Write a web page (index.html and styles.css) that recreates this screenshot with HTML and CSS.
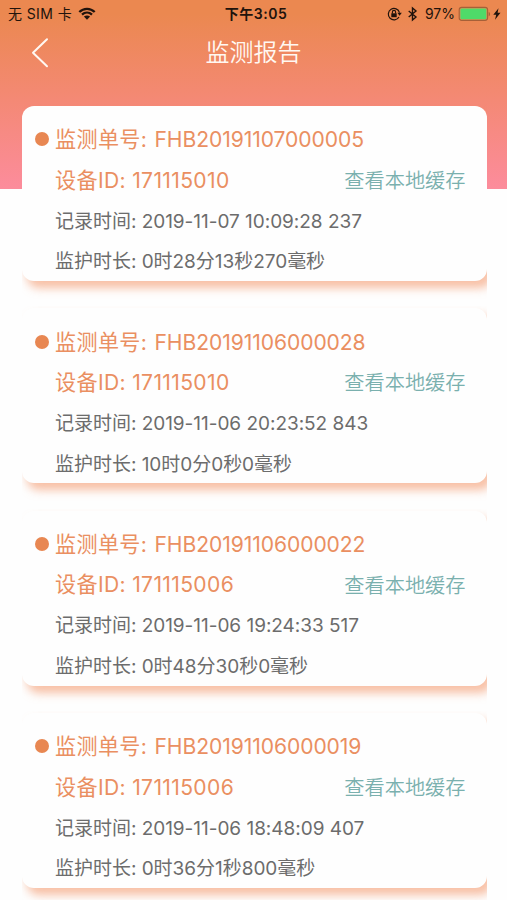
FILE: index.html
```html
<!DOCTYPE html>
<html lang="zh-CN">
<head>
<meta charset="utf-8">
<title>监测报告</title>
<link rel="stylesheet" href="styles.css">
</head>
<body>
<div class="screen">
  <header class="status">
    <div class="carrier"><span>无 SIM 卡</span>
      <svg class="wifi" viewBox="0 0 18 13"><path d="M1.3 5C5.7.7 12.3.7 16.7 5M4 7.7c2.9-2.7 7.1-2.7 10 0" fill="none" stroke="currentColor" stroke-width="2.3"/><path d="M5.9 9.6c1.8-1.6 4.4-1.6 6.2 0L9 12.7z" fill="currentColor"/></svg>
    </div>
    <div class="clock">下午3:05</div>
    <div class="indicators">
      <svg class="lock" viewBox="0 0 15 14"><path d="M12 10A5.7 5.7 0 1 1 12.5 5.6" fill="none" stroke="currentColor" stroke-width="1.2"/><path d="M10.4 5.7h4.4L12.6 8.8z" fill="currentColor"/><path d="M4.3 6.3h5.4v3.9H4.3z" fill="currentColor"/><path d="M5.4 6.6V5a1.6 1.6 0 0 1 3.2 0v1.6" fill="none" stroke="currentColor" stroke-width="1.1"/></svg>
      <svg class="bluetooth" viewBox="0 0 9 14"><path d="M.7 4 8 10 4.5 13V1L8 4 .7 10" fill="none" stroke="currentColor" stroke-width="1.4"/></svg>
      <span class="percent">97%</span>
      <svg class="battery" viewBox="0 0 32 14"><rect x=".2" y=".4" width="28.4" height="13" rx="2.6" fill="none" stroke="#a66038" stroke-width="1.1"/><rect x="1.4" y="1.5" width="26" height="10.8" rx="1.2" fill="#4fda69"/><path d="M29.7 5c1.8.3 1.8 3.9 0 4.2z" fill="#a66038"/></svg>
      <svg class="bolt" viewBox="0 0 8 12"><path d="M5.5.3.3 6.8h2.9L2 11.7l5.5-6.9H4.6z" fill="currentColor"/></svg>
    </div>
  </header>
  <nav class="nav">
    <svg class="back" viewBox="0 0 18 30"><path d="M16 1.3 2 14.7 16 28.2" fill="none" stroke="currentColor" stroke-width="2" stroke-linecap="round" stroke-linejoin="round"/></svg>
    <h1 class="title">监测报告</h1>
  </nav>
  <main class="list">
    <section class="cell"><article class="card">
      <div class="row number"><i class="dot"></i><span>监测单号: <b>FHB20191107000005</b></span></div>
      <div class="row device"><span>设备ID: 171115010</span><a class="link">查看本地缓存</a></div>
      <div class="row detail">记录时间: 2019-11-07 10:09:28 237</div>
      <div class="row detail">监护时长: 0时28分13秒270毫秒</div>
    </article></section>
    <section class="cell"><article class="card">
      <div class="row number"><i class="dot"></i><span>监测单号: <b>FHB20191106000028</b></span></div>
      <div class="row device"><span>设备ID: 171115010</span><a class="link">查看本地缓存</a></div>
      <div class="row detail">记录时间: 2019-11-06 20:23:52 843</div>
      <div class="row detail">监护时长: 10时0分0秒0毫秒</div>
    </article></section>
    <section class="cell"><article class="card">
      <div class="row number"><i class="dot"></i><span>监测单号: <b>FHB20191106000022</b></span></div>
      <div class="row device"><span>设备ID: 171115006</span><a class="link">查看本地缓存</a></div>
      <div class="row detail">记录时间: 2019-11-06 19:24:33 517</div>
      <div class="row detail">监护时长: 0时48分30秒0毫秒</div>
    </article></section>
    <section class="cell"><article class="card">
      <div class="row number"><i class="dot"></i><span>监测单号: <b>FHB20191106000019</b></span></div>
      <div class="row device"><span>设备ID: 171115006</span><a class="link">查看本地缓存</a></div>
      <div class="row detail">记录时间: 2019-11-06 18:48:09 407</div>
      <div class="row detail">监护时长: 0时36分1秒800毫秒</div>
    </article></section>
  </main>
</div>
</body>
</html>
```
FILE: styles.css
```css
* { box-sizing: border-box; }
body { margin: 0; background: #fefefe; font-family: Inter, "Noto Sans CJK SC", sans-serif; }
.screen { width: 507px; height: 900px; overflow: hidden; background: linear-gradient(#eb8850 0, #eb8850 14px, #f48975 100px, #fc8c9c 189px) 0 0 / 100% 189px no-repeat; }
svg { display: block; flex: none; overflow: visible; }
.status { display: grid; grid-template-columns: 1fr auto 1fr; align-items: center; height: 28px; padding: 0 6px 0 8px; color: #21130c; font-size: 14px; line-height: 28px; white-space: nowrap; }
.carrier, .indicators { display: flex; align-items: center; }
.carrier { letter-spacing: .4px; }
.indicators { justify-content: flex-end; }
.clock { font-weight: 600; font-size: 14px; letter-spacing: .55px; margin-left: 3px; }
.wifi { width: 18px; height: 13px; margin: -1px 0 0 6px; }
.lock { width: 15px; height: 14px; margin: -1px 0 0; }
.bluetooth { width: 9px; height: 14px; margin: -1px 0 0 6px; }
.percent { margin: 0 4px 0 8px; }
.battery { width: 32px; height: 14px; margin-top: -1px; }
.bolt { width: 8px; height: 12px; margin: -1px 0 0 2px; }
.nav { display: grid; grid-template-columns: 60px 1fr 60px; align-items: center; height: 50px; color: #fff8f2; }
.back { width: 18px; height: 30px; margin-left: 31px; }
.title { margin: 0; font-size: 24px; line-height: 50px; font-weight: 350; text-align: center; }
.list { padding: 26px 20.5px 0 21.5px; }
.cell { height: 202.3px; padding-top: 2px; overflow: hidden; }
.card { height: 175px; padding: 12px 21px 0 12.5px; border-radius: 12px; background: #fefefe; box-shadow: 5px 7px 10px rgba(244, 150, 105, .6); color: #6c6c6c; }
.row { display: flex; align-items: center; height: 40.5px; padding-left: 21px; white-space: nowrap; }
.number { padding-left: 0; }
.number, .device { color: #ea8f61; font-size: 21.1px; font-weight: 400; letter-spacing: .35px; }
.number b { margin-left: 1px; font-weight: 400; letter-spacing: -.08px; }
.device { justify-content: space-between; }
.dot { width: 14px; height: 14px; margin: 2px 6.5px 0 .5px; border-radius: 50%; background: #e88752; }
.link { margin-top: 1.5px; color: #7ab0ae; font-size: 20.2px; font-weight: 350; letter-spacing: 0; }
.detail { font-size: 19px; letter-spacing: -.03px; }
```
